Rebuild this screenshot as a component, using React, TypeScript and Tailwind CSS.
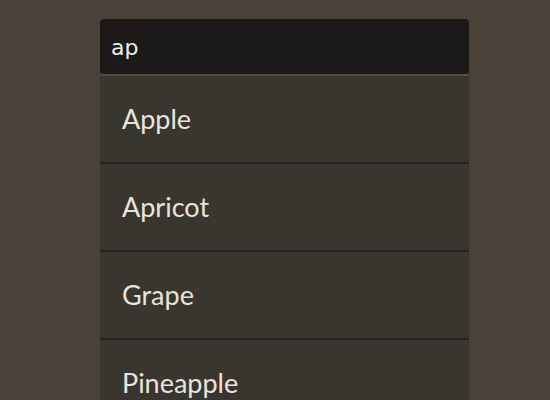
const fruits = ["Apple", "Apricot", "Grape", "Pineapple"];

export default function App() {
  return (
    <div className="h-[400px] overflow-hidden bg-[#4a4238] pt-[19px] pl-[100px]">
      <div className="w-[369px]">
        <div className="flex h-[57px] items-center rounded-[4px] border-b-2 border-[#574e42] bg-[#1c1a18] pl-[11px] pt-[1px] font-['DejaVu_Sans',sans-serif] text-[22px] text-[#eeeeee]">
          ap
        </div>
        <ul className="bg-[#39352f]">
          {fruits.map((fruit) => (
            <li
              key={fruit}
              className="flex h-[88px] items-center border-b-2 border-[#262320] pl-[22px] font-['Lato',sans-serif] text-[27px] text-[#e8e4de]"
            >
              {fruit}
            </li>
          ))}
        </ul>
      </div>
    </div>
  );
}
